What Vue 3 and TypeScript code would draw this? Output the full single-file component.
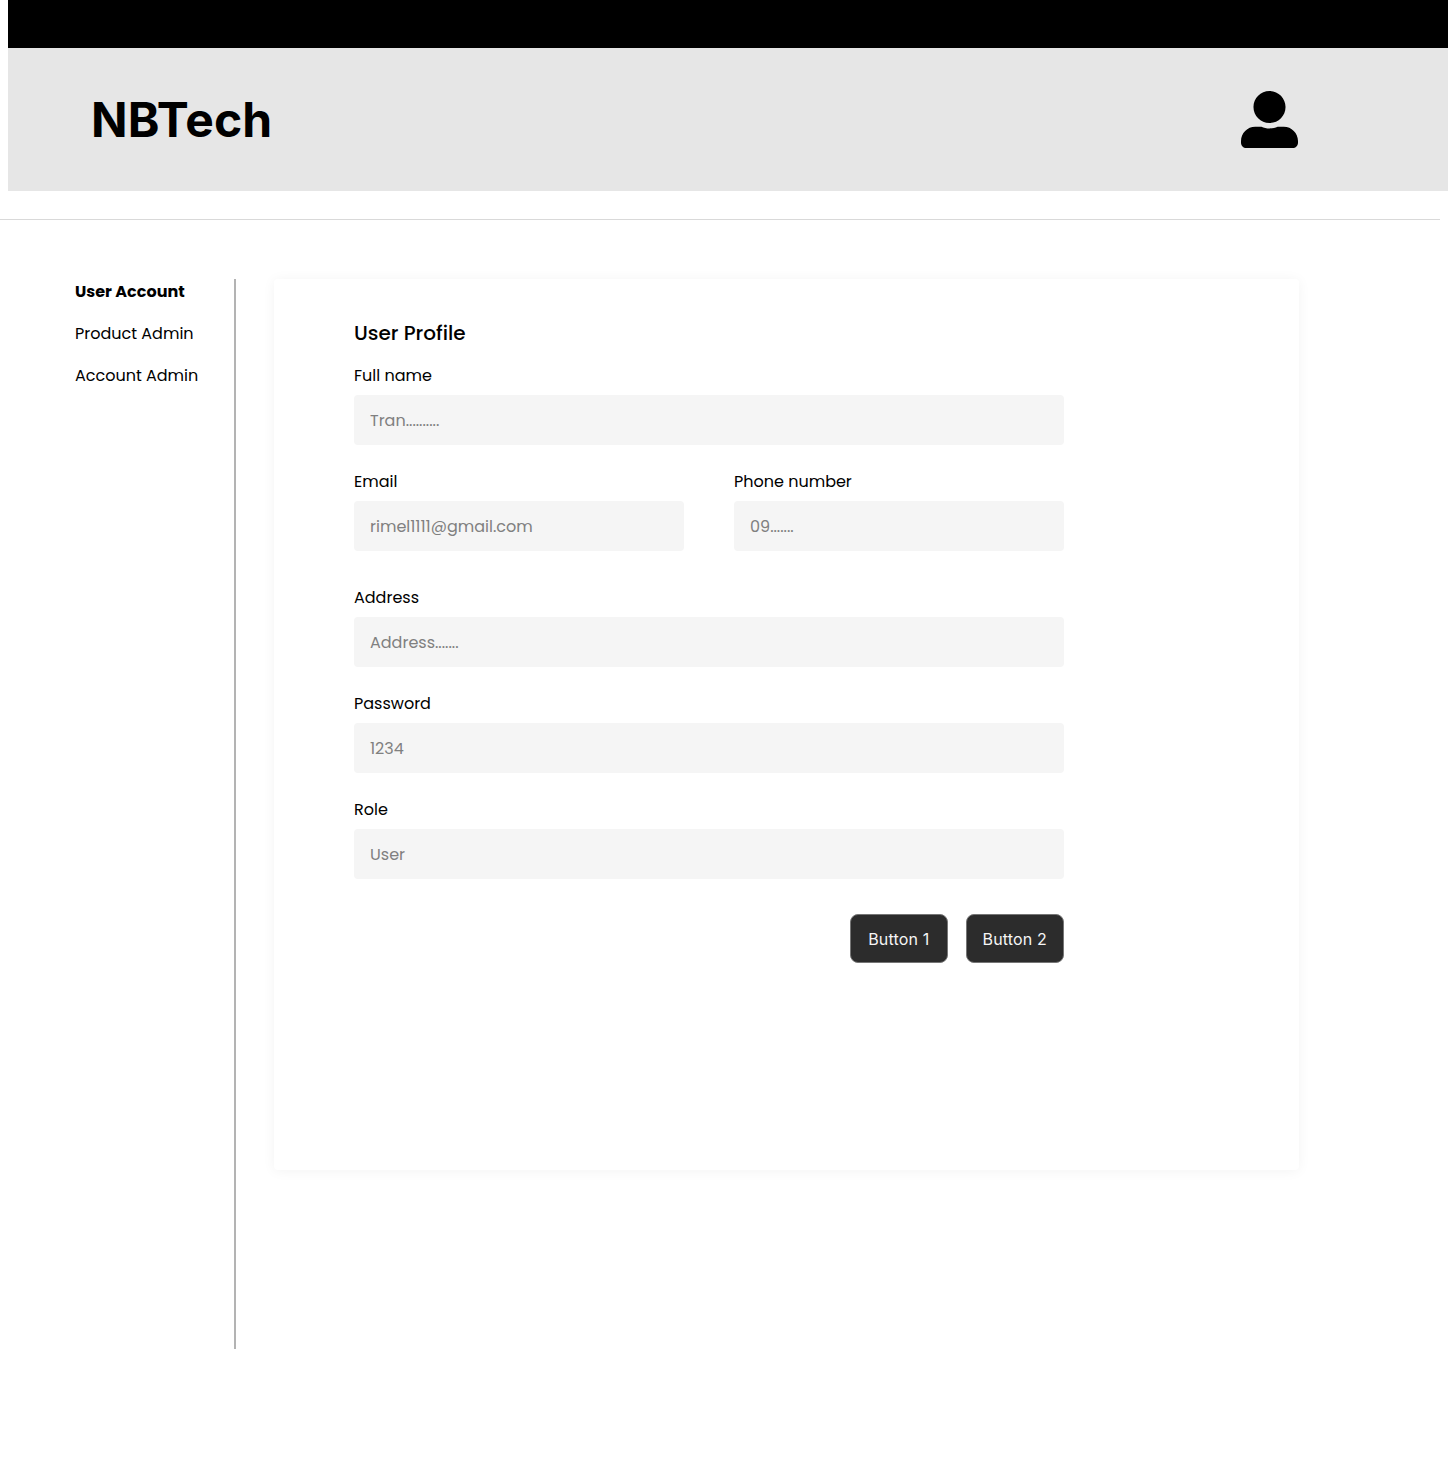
<script setup lang="ts">
interface Field {
  label: string
  value: string
}

const menu: string[] = ['User Account', 'Product Admin', 'Account Admin']
const active = 'User Account'

const rows: Field[][] = [
  [{ label: 'Full name', value: 'Tran..........' }],
  [
    { label: 'Email', value: 'rimel1111@gmail.com' },
    { label: 'Phone number', value: '09.......' },
  ],
  [{ label: 'Address', value: 'Address.......' }],
  [{ label: 'Password', value: '1234' }],
  [{ label: 'Role', value: 'User' }],
]
</script>

<template>
  <div class="page">
    <div class="topbar"></div>
    <header class="header">
      <h1 class="brand">NBTech</h1>
      <svg class="avatar" viewBox="0 0 512 512" aria-hidden="true">
        <path
          d="M256 288c79.5 0 144-64.5 144-144S335.5 0 256 0 112 64.5 112 144s64.5 144 144 144zm128 32h-55.1c-22.2 10.2-46.9 16-72.9 16s-50.6-5.8-72.9-16H128C57.3 320 0 377.3 0 448v16c0 26.5 21.5 48 48 48h416c26.5 0 48-21.5 48-48v-16c0-70.7-57.3-128-128-128z"
        />
      </svg>
    </header>
    <div class="rule"></div>
    <main class="content">
      <nav class="sidebar">
        <a v-for="item in menu" :key="item" :class="{ active: item === active }">{{ item }}</a>
      </nav>
      <section class="card">
        <h2 class="title">User Profile</h2>
        <div v-for="(row, i) in rows" :key="i" class="row" :class="{ split: row.length > 1 }">
          <div v-for="field in row" :key="field.label" class="field">
            <div class="label">{{ field.label }}</div>
            <div class="input">{{ field.value }}</div>
          </div>
        </div>
        <div class="actions">
          <button type="button">Button 1</button>
          <button type="button">Button 2</button>
        </div>
      </section>
    </main>
  </div>
</template>

<style>
body {
  background: #fff;
}
</style>

<style scoped>
.page {
  box-sizing: border-box;
  width: 1448px;
  height: 1466px;
  overflow: hidden;
  color: #000;
  font-family: Poppins, Inter, sans-serif;
  font-size: 16px;
  line-height: 24px;
}
.topbar {
  height: 48px;
  margin-left: 8px;
  background: #000;
}
.header {
  box-sizing: border-box;
  display: flex;
  align-items: center;
  justify-content: space-between;
  height: 143px;
  margin-left: 8px;
  padding: 0 150px 0 83px;
  background: #e6e6e6;
}
.brand {
  margin: 0;
  font: 700 48px/60px Inter, sans-serif;
  letter-spacing: 0.1px;
}
.avatar {
  width: 57px;
  height: 57px;
}
.rule {
  width: 1440px;
  height: 1px;
  margin-top: 28px;
  background: #d9d9d9;
}
.content {
  display: flex;
  align-items: flex-start;
  margin-top: 59px;
}
.sidebar {
  box-sizing: border-box;
  display: flex;
  flex-direction: column;
  gap: 18px;
  width: 236px;
  height: 1070px;
  padding: 1px 0 0 75px;
  border-right: 2px solid #b3b3b3;
}
.active {
  font-weight: 700;
}
.card {
  box-sizing: border-box;
  width: 1025px;
  height: 891px;
  margin-left: 38px;
  padding: 40px 235px 0 80px;
  border-radius: 4px;
  background: #fff;
  box-shadow: 0 1px 13px rgba(0, 0, 0, 0.05);
}
.title {
  margin: 0 0 17px;
  font-size: 20px;
  font-weight: 500;
  line-height: 28px;
}
.row {
  display: flex;
  gap: 50px;
  margin-bottom: 25px;
}
.row.split {
  margin-bottom: 35px;
}
.field {
  flex: 1;
}
.label {
  margin-bottom: 7px;
}
.input {
  box-sizing: border-box;
  height: 50px;
  padding: 14px 16px 12px;
  border-radius: 4px;
  background: #f5f5f5;
  color: #808080;
}
.actions {
  display: flex;
  justify-content: flex-end;
  gap: 18px;
  margin-top: 35px;
}
button {
  box-sizing: border-box;
  width: 98px;
  height: 49px;
  padding: 0 0.5px 0 0;
  border: 1px solid #767676;
  border-radius: 8px;
  background: #2c2c2c;
  color: #f5f5f5;
  font: 400 16px/20px Inter, sans-serif;
  letter-spacing: 0.15px;
}
</style>
